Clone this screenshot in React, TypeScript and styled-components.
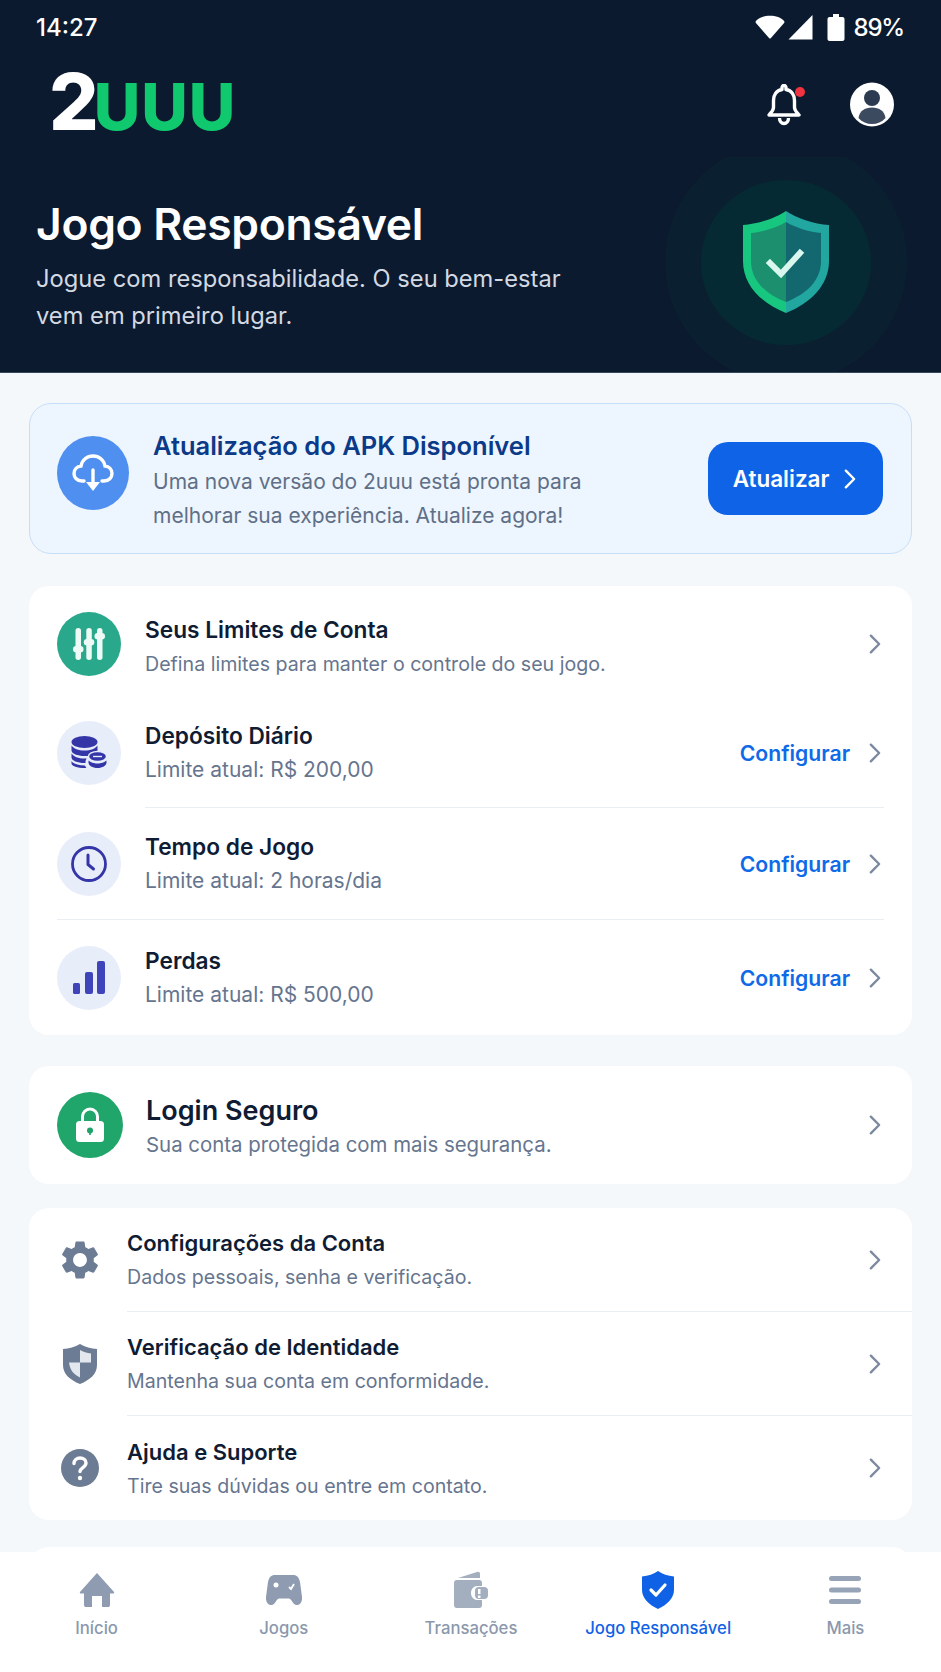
import React from "react";
import styled, { createGlobalStyle } from "styled-components";
import { MdSettings } from "react-icons/md";

const GlobalStyle = createGlobalStyle`
  html, body {
    margin: 0;
    padding: 0;
    background: #f5f8fb;
  }
  * { box-sizing: border-box; }
`;

const Page = styled.div`
  width: 941px;
  height: 1672px;
  display: flex;
  flex-direction: column;
  overflow: hidden;
  background: #f5f8fb;
  font-family: Inter, "Noto Sans", sans-serif;
`;

const Header = styled.header`
  flex: none;
  height: 373px;
  background: #0b1a2e;
  color: #fff;
  border-bottom: 1px solid #33495c;
`;

const StatusBar = styled.div`
  height: 52px;
  padding: 2px 37px 0 36px;
  display: flex;
  align-items: center;
  justify-content: space-between;
  font-size: 24px;
  font-weight: 500;
`;

const StatusIcons = styled.div`
  display: flex;
  align-items: center;
`;

const StatusGlyph = styled.span<{ $left: number }>`
  display: flex;
  margin-left: ${(p) => p.$left}px;
`;

const Percent = styled.span`
  margin-left: 9px;
  letter-spacing: -1.2px;
`;

const TopBar = styled.div`
  height: 105px;
  padding: 0 47px 0 49px;
  display: flex;
  align-items: flex-start;
  justify-content: space-between;
`;

const Logo = styled.div`
  display: flex;
  align-items: baseline;
  height: 78px;
  margin-top: 11px;
  line-height: 78px;
  font-weight: 800;
`;

const LogoTwo = styled.span`
  font-size: 78px;
  letter-spacing: -4px;
  color: #fff;
`;

const LogoRest = styled.span`
  font-size: 64px;
  letter-spacing: 1px;
  text-transform: uppercase;
  color: #10c96f;
  margin-left: -1px;
`;

const TopActions = styled.div`
  display: flex;
  align-items: center;
  gap: 42px;
  margin-top: 30px;
`;

const Hero = styled.div`
  height: 215px;
  display: flex;
  justify-content: space-between;
`;

const HeroText = styled.div`
  padding: 39px 0 0 36px;
`;

const HeroTitle = styled.h1`
  margin: 0;
  font-size: 44.4px;
  line-height: 56px;
  font-weight: 600;
  letter-spacing: -0.3px;
`;

const HeroSub = styled.p`
  margin: 9px 0 0;
  width: 560px;
  font-size: 23.7px;
  line-height: 36.5px;
  color: #d3d9e2;
`;

const GlowBox = styled.div`
  width: 242px;
  margin-right: 34px;
  overflow: hidden;
  display: flex;
  align-items: center;
  justify-content: center;
`;

const GlowOuter = styled.div`
  flex: none;
  width: 242px;
  height: 242px;
  margin-top: -5px;
  border-radius: 50%;
  background: #0a2030;
  display: flex;
  align-items: center;
  justify-content: center;
`;

const GlowInner = styled.div`
  width: 170px;
  height: 165px;
  border-radius: 50%;
  background: #062a34;
  display: flex;
  align-items: center;
  justify-content: center;
`;

const Main = styled.main`
  flex: 1;
  min-height: 0;
  overflow: hidden;
  padding: 30px 29px 0;
  display: flex;
  flex-direction: column;
`;

const UpdateCard = styled.section`
  flex: none;
  height: 151px;
  padding: 0 28px 0 27px;
  display: flex;
  align-items: center;
  background: #edf5fe;
  border: 1.5px solid #c7def8;
  border-radius: 22px;
`;

const UpdateIcon = styled.div`
  flex: none;
  width: 72px;
  height: 74px;
  margin-bottom: 11px;
  border-radius: 50%;
  background: #4f8ff0;
  display: flex;
  align-items: center;
  justify-content: center;
`;

const UpdateText = styled.div`
  flex: 1;
  margin-left: 24px;
  padding-top: 5px;
`;

const UpdateTitle = styled.div`
  font-size: 25.5px;
  line-height: 34px;
  font-weight: 600;
  color: #0b3a88;
`;

const UpdateSub = styled.div`
  margin-top: 2px;
  font-size: 21px;
  line-height: 34px;
  color: #5f6f87;
`;

const UpdateButton = styled.button`
  flex: none;
  width: 175px;
  height: 73px;
  border: 0;
  border-radius: 20px;
  background: #0e63e6;
  color: #fff;
  font-family: inherit;
  font-size: 22.5px;
  font-weight: 600;
  display: flex;
  align-items: center;
  justify-content: center;
  gap: 14px;
`;

const Card = styled.section<{ $top: number; $peek?: boolean }>`
  flex: none;
  margin-top: ${(p) => p.$top}px;
  height: ${(p) => (p.$peek ? "60px" : "auto")};
  background: #fff;
  border-radius: 20px;
`;

const Row = styled.div<{ $height: number; $nudge?: number }>`
  height: ${(p) => p.$height}px;
  padding: ${(p) => p.$nudge ?? 0}px 29px 0 28px;
  display: flex;
  align-items: center;
`;

const RoundIcon = styled.div<{ $bg: string; $size?: number }>`
  flex: none;
  width: ${(p) => p.$size ?? 64}px;
  height: ${(p) => p.$size ?? 64}px;
  border-radius: 50%;
  background: ${(p) => p.$bg};
  display: flex;
  align-items: center;
  justify-content: center;
`;

const PlainIcon = styled.div`
  flex: none;
  width: 46px;
  display: flex;
  justify-content: center;
`;

const RowText = styled.div<{ $gap: number; $nudge?: number }>`
  flex: 1;
  margin-left: ${(p) => p.$gap}px;
  padding-top: ${(p) => p.$nudge ?? 0}px;
`;

const RowTitle = styled.div<{ $size?: number }>`
  font-size: ${(p) => p.$size ?? 22.7}px;
  line-height: 32px;
  font-weight: 600;
  color: #0f1c33;
`;

const RowSub = styled.div<{ $size?: number }>`
  margin-top: 3px;
  font-size: ${(p) => p.$size ?? 19.6}px;
  line-height: 30px;
  color: #66758e;
`;

const ConfigLink = styled.span`
  margin-right: 18px;
  font-size: 21.2px;
  font-weight: 600;
  color: #0f6ae8;
`;

const Divider = styled.div<{ $left: number; $right: number }>`
  height: 1px;
  margin: 0 ${(p) => p.$right}px 0 ${(p) => p.$left}px;
  background: #e9eef4;
`;

const BottomNav = styled.nav`
  flex: none;
  height: 120px;
  padding: 17px 2px 0 3px;
  display: grid;
  grid-template-columns: repeat(5, 1fr);
  background: #fff;
`;

const NavItem = styled.div<{ $active?: boolean }>`
  display: flex;
  flex-direction: column;
  align-items: center;
  font-size: 16.7px;
  font-weight: 500;
  color: ${(p) => (p.$active ? "#0f62e6" : "#8b98ac")};
`;

const NavIcon = styled.div`
  height: 42px;
  display: flex;
  align-items: center;
  justify-content: center;
`;

const NavLabel = styled.span`
  margin-top: 5px;
  line-height: 24px;
  white-space: nowrap;
`;

const Chevron = ({ color = "#7c8aa0", size = 24 }: { color?: string; size?: number }) => (
  <svg width={size * 0.62} height={size} viewBox="0 0 16 26" fill="none">
    <path d="M3 4l9 9-9 9" stroke={color} strokeWidth="2.6" strokeLinecap="round" strokeLinejoin="round" />
  </svg>
);

const Wifi = () => (
  <svg width="30" height="26" viewBox="0 0 32 26">
    <path d="M1 6.5C4 3 10 1 16 1s12 2 15 5.5c.6.8.5 1.500 0 2.200L16.800 25c-.4.500-1.200.500-1.600 0L1 8.700c-.5-.7-.6-1.400 0-2.200z" fill="#fff" />
  </svg>
);

const Signal = () => (
  <svg width="25" height="26" viewBox="0 0 25 26">
    <path d="M24.500 1V25.500H.5z" fill="#fff" />
  </svg>
);

const Battery = () => (
  <svg width="18" height="27" viewBox="0 0 18 27">
    <path d="M6 0h6v3h3.500c1 0 2 .8 2 2v20c0 1.200-1 2-2 2h-13c-1 0-2-.8-2-2V5c0-1.200 1-2 2-2H6z" fill="#fff" />
  </svg>
);

const Bell = () => (
  <svg width="44" height="42" viewBox="0 0 44 42" fill="none">
    <path
      d="M18 3.500c0-1 1-2 2-2s2 1 2 2v2c5.500 1 8.500 5.500 8.500 11v7c0 3 2.500 5 4.500 7.500H5c2-2.500 4.500-4.500 4.500-7.500v-7c0-5.500 3-10 8.500-11z"
      stroke="#fff"
      strokeWidth="3.400"
      strokeLinejoin="round"
    />
    <path d="M15.500 34c0 3 2 5.500 4.500 5.500s4.500-2.500 4.500-5.500" stroke="#fff" strokeWidth="3.400" />
    <circle cx="36" cy="8" r="5" fill="#ef3340" />
  </svg>
);

const Avatar = () => (
  <svg width="44" height="45" viewBox="0 0 44 45">
    <circle cx="22" cy="22.500" r="22" fill="#fff" />
    <circle cx="22" cy="16" r="8" fill="#2b3a50" />
    <path d="M8.500 36c1-7 6-10.500 13.500-10.500S34.500 29 35.500 36C32 40 27 42 22 42s-10-2-13.500-6z" fill="#3c4a5f" />
  </svg>
);

const BigShield = () => (
  <svg width="86" height="102" viewBox="0 0 86 102">
    <path d="M43 0C33 7 15 13 0 14v36c0 24 18 42 43 52z" fill="#17c77f" />
    <path d="M43 0c10 7 28 13 43 14v36c0 24-18 42-43 52z" fill="#21a79f" />
    <path d="M43 11C33 17 19 21 8 22v28c0 19 14 33 35 41z" fill="#1c8f6f" />
    <path d="M43 11c10 6 24 10 35 11v28c0 19-14 33-35 41z" fill="#12686e" />
    <path d="M27 52l11 11 19-21" fill="none" stroke="#d9f7ee" strokeWidth="6" strokeLinecap="square" />
  </svg>
);

const CloudIcon = () => (
  <svg width="44" height="44" viewBox="0 0 44 44" fill="none">
    <path
      d="M13 30H11C6 30 3 26.500 3 22.500S6 15.500 10 15C11 9 16 5 22 5s11 4 12 10c4 .5 7 3.500 7 7.500S38 30 33 30h-2"
      stroke="#fff"
      strokeWidth="3.400"
      strokeLinecap="round"
    />
    <path d="M22 19v16" stroke="#fff" strokeWidth="3.400" strokeLinecap="round" />
    <path d="M15 31h14l-7 9z" fill="#fff" />
  </svg>
);

const SlidersIcon = () => (
  <svg width="32" height="34" viewBox="0 0 32 34">
    <g fill="#eefaf6">
      <rect x="2.500" y="1" width="5.500" height="32" rx="2.700" />
      <rect x="13.300" y="1" width="5.500" height="32" rx="2.700" />
      <rect x="24" y="1" width="5.500" height="32" rx="2.700" />
      <rect x="0" y="19" width="10.500" height="6.500" rx="3.200" />
      <rect x="10.800" y="12" width="10.500" height="6.500" rx="3.200" />
      <rect x="21.500" y="6" width="10.500" height="6.500" rx="3.200" />
    </g>
  </svg>
);

const CoinsIcon = () => (
  <svg width="36" height="34" viewBox="0 0 36 34" fill="#3436a8">
    <ellipse cx="13.500" cy="6" rx="13" ry="6" />
    <path d="M.5 9.500c2 3 7 5 13 5s11-2 13-5v5c0 3-6 5.500-13 5.500S.5 17.500.5 14.500z" />
    <path d="M.5 17.500c2 3 7 5 13 5 .8 0 1.500 0 2.300-.1-.8 1-1.300 2.200-1.300 3.500v1.100c-.3 0-.7 0-1 0-7 0-13-2.500-13-5.500z" />
    <path d="M.5 25c2 3 7 4.500 13.500 4.500.3.900.8 1.700 1.400 2.400-.6 0-1.200.1-1.900.1-7 0-13-2-13-4.500z" />
    <ellipse cx="26.500" cy="20.500" rx="9" ry="5" stroke="#e8edfa" strokeWidth="1.400" />
    <path d="M17.500 24.500c2 1.700 5.500 3 9 3s7-1.300 9-3v2c0 3-4 5.500-9 5.500s-9-2.500-9-5.500z" />
    <path d="M22 20.500h9" stroke="#e8edfa" strokeWidth="1.400" />
  </svg>
);

const ClockIcon = () => (
  <svg width="36" height="36" viewBox="0 0 36 36" fill="none" stroke="#3436a8">
    <circle cx="18" cy="18" r="16.500" strokeWidth="2.800" />
    <path d="M17 9v9.500l5.500 4.500" strokeWidth="3" strokeLinecap="round" strokeLinejoin="round" />
  </svg>
);

const BarsIcon = () => (
  <svg width="32" height="33" viewBox="0 0 32 33" fill="#3f44b8">
    <rect x="0" y="22" width="7" height="11" rx="1.500" />
    <rect x="12" y="11" width="8" height="22" rx="2" />
    <rect x="24" y="0" width="8" height="33" rx="2" />
  </svg>
);

const LockIcon = () => (
  <svg width="30" height="36" viewBox="0 0 30 36" fill="none">
    <path d="M7.500 15V9.500a7.500 7.500 0 0 1 15 0V15" stroke="#fff" strokeWidth="3" />
    <rect x="1" y="14" width="28" height="21" rx="3.500" fill="#fff" />
    <circle cx="15" cy="23.500" r="3" fill="#1fa368" />
    <path d="M15 24v4" stroke="#1fa368" strokeWidth="1.600" />
  </svg>
);

const SmallShield = () => (
  <svg width="34" height="40" viewBox="0 0 34 40">
    <path d="M17 0C12 3 6 4.500 0 5v16c0 9 7 15 17 19 10-4 17-10 17-19V5c-6-.5-12-2-17-5z" fill="#6c7c94" />
    <path d="M17 6c3 2 7 3 11 3.500v9H17zM17 18.500v15c-6-3-10-7-11-15z" fill="#e3e8ef" />
  </svg>
);

const HelpIcon = () => (
  <svg width="38" height="38" viewBox="0 0 38 38">
    <circle cx="19" cy="19" r="19" fill="#6c7c94" />
    <path d="M13 14.500c0-3.500 2.800-5.500 6-5.500s6 2 6 5c0 4.500-6 4.500-6 8.500" fill="none" stroke="#fff" strokeWidth="3.400" strokeLinecap="round" />
    <circle cx="19" cy="29" r="2.200" fill="#fff" />
  </svg>
);

const HomeIcon = () => (
  <svg width="36" height="36" viewBox="0 0 36 36" fill="#8e9bb0">
    <path d="M18 1L35 20c.5.800 0 1.500-1 1.500h-3V33c0 1.500-1 2-2 2h-6V24h-10v11H7c-1 0-2-.5-2-2V21.500H2c-1 0-1.500-.7-1-1.500z" />
  </svg>
);

const PadIcon = () => (
  <svg width="36" height="32" viewBox="0 0 36 32">
    <path d="M9 1h18c4 0 6 2.500 7 7l2 15c.5 5-2 8-5 8-2.500 0-4-2-5.500-4.500-1-1.500-2-2-3.500-2H14c-1.500 0-2.500.5-3.500 2C9 29 7.500 31 5 31c-3 0-5.500-3-5-8L2 8c1-4.500 3-7 7-7z" fill="#8e9bb0" />
    <circle cx="10" cy="11" r="2.500" fill="#fff" />
    <path d="M23 13l2 2 3-5" fill="none" stroke="#fff" strokeWidth="1.800" />
  </svg>
);

const WalletIcon = () => (
  <svg width="34" height="38" viewBox="0 0 34 38" fill="#a3aebf">
    <path d="M4 7L23 1c2-.5 3 .5 3 2v4z" />
    <path d="M3 9h22c2 0 3 1 3 3v3h-5c-3 0-6 3-6 7s3 7 6 7h5v5c0 2-1 3-3 3H3c-2 0-3-1-3-3V12c0-2 1-3 3-3z" />
    <rect x="21" y="16" width="13" height="12" rx="4" />
    <rect x="24" y="18" width="2.500" height="5" fill="#fff" />
    <rect x="24" y="24.500" width="2.500" height="2.500" fill="#fff" />
  </svg>
);

const NavShield = () => (
  <svg width="32" height="38" viewBox="0 0 32 38">
    <path d="M16 0c4 3 10 5 16 5.500V19c0 8-7 15-16 19C7 34 0 27 0 19V5.500C6 5 12 3 16 0z" fill="#0f62e6" />
    <path d="M9 19l5 5 9-10" fill="none" stroke="#fff" strokeWidth="3.200" strokeLinecap="round" strokeLinejoin="round" />
  </svg>
);

const MenuIcon = () => (
  <svg width="32" height="30" viewBox="0 0 32 30" fill="#97a3b6">
    <rect y="1" width="32" height="5" rx="2.500" />
    <rect y="12.500" width="32" height="5" rx="2.500" />
    <rect y="24" width="32" height="5" rx="2.500" />
  </svg>
);

const limits = [
  { title: "Depósito Diário", sub: "Limite atual: R$ 200,00", icon: <CoinsIcon />, height: 109, dividerLeft: 116 },
  { title: "Tempo de Jogo", sub: "Limite atual: 2 horas/dia", icon: <ClockIcon />, height: 111, dividerLeft: 28 },
  { title: "Perdas", sub: "Limite atual: R$ 500,00", icon: <BarsIcon />, height: 115, dividerLeft: 0 },
];

const settings = [
  { title: "Configurações da Conta", sub: "Dados pessoais, senha e verificação.", icon: <MdSettings size={48} color="#6c7c94" />, height: 103 },
  { title: "Verificação de Identidade", sub: "Mantenha sua conta em conformidade.", icon: <SmallShield />, height: 103 },
  { title: "Ajuda e Suporte", sub: "Tire suas dúvidas ou entre em contato.", icon: <HelpIcon />, height: 104 },
];

const navItems = [
  { label: "Início", icon: <HomeIcon /> },
  { label: "Jogos", icon: <PadIcon /> },
  { label: "Transações", icon: <WalletIcon /> },
  { label: "Jogo Responsável", icon: <NavShield />, active: true },
  { label: "Mais", icon: <MenuIcon /> },
];

export default function App() {
  return (
    <Page>
      <GlobalStyle />
      <Header>
        <StatusBar>
          <span>14:27</span>
          <StatusIcons>
            <Wifi />
            <StatusGlyph $left={3}>
              <Signal />
            </StatusGlyph>
            <StatusGlyph $left={14}>
              <Battery />
            </StatusGlyph>
            <Percent>89%</Percent>
          </StatusIcons>
        </StatusBar>
        <TopBar>
          <Logo>
            <LogoTwo>2</LogoTwo>
            <LogoRest>uuu</LogoRest>
          </Logo>
          <TopActions>
            <Bell />
            <Avatar />
          </TopActions>
        </TopBar>
        <Hero>
          <HeroText>
            <HeroTitle>Jogo Responsável</HeroTitle>
            <HeroSub>Jogue com responsabilidade. O seu bem-estar vem em primeiro lugar.</HeroSub>
          </HeroText>
          <GlowBox>
            <GlowOuter>
              <GlowInner>
                <BigShield />
              </GlowInner>
            </GlowOuter>
          </GlowBox>
        </Hero>
      </Header>

      <Main>
        <UpdateCard>
          <UpdateIcon>
            <CloudIcon />
          </UpdateIcon>
          <UpdateText>
            <UpdateTitle>Atualização do APK Disponível</UpdateTitle>
            <UpdateSub>
              Uma nova versão do 2uuu está pronta para
              <br />
              melhorar sua experiência. Atualize agora!
            </UpdateSub>
          </UpdateText>
          <UpdateButton>
            Atualizar
            <Chevron color="#fff" />
          </UpdateButton>
        </UpdateCard>

        <Card $top={32}>
          <Row $height={112} $nudge={4}>
            <RoundIcon $bg="#2aa88c">
              <SlidersIcon />
            </RoundIcon>
            <RowText $gap={24} $nudge={5}>
              <RowTitle>Seus Limites de Conta</RowTitle>
              <RowSub>Defina limites para manter o controle do seu jogo.</RowSub>
            </RowText>
            <Chevron />
          </Row>
          {limits.map((item) => (
            <React.Fragment key={item.title}>
              <Row $height={item.height}>
                <RoundIcon $bg="#e8edfa">{item.icon}</RoundIcon>
                <RowText $gap={24}>
                  <RowTitle>{item.title}</RowTitle>
                  <RowSub $size={21}>{item.sub}</RowSub>
                </RowText>
                <ConfigLink>Configurar</ConfigLink>
                <Chevron />
              </Row>
              {item.dividerLeft > 0 && <Divider $left={item.dividerLeft} $right={28} />}
            </React.Fragment>
          ))}
        </Card>

        <Card $top={31}>
          <Row $height={118}>
            <RoundIcon $bg="#20a56b" $size={66}>
              <LockIcon />
            </RoundIcon>
            <RowText $gap={23} $nudge={4}>
              <RowTitle $size={27}>Login Seguro</RowTitle>
              <RowSub $size={20.4}>Sua conta protegida com mais segurança.</RowSub>
            </RowText>
            <Chevron />
          </Row>
        </Card>

        <Card $top={24}>
          {settings.map((item, i) => (
            <React.Fragment key={item.title}>
              {i > 0 && <Divider $left={98} $right={0} />}
              <Row $height={item.height}>
                <PlainIcon>{item.icon}</PlainIcon>
                <RowText $gap={24}>
                  <RowTitle $size={22}>{item.title}</RowTitle>
                  <RowSub>{item.sub}</RowSub>
                </RowText>
                <Chevron />
              </Row>
            </React.Fragment>
          ))}
        </Card>

        <Card $top={27} $peek />
      </Main>

      <BottomNav>
        {navItems.map((item) => (
          <NavItem key={item.label} $active={item.active}>
            <NavIcon>{item.icon}</NavIcon>
            <NavLabel>{item.label}</NavLabel>
          </NavItem>
        ))}
      </BottomNav>
    </Page>
  );
}
